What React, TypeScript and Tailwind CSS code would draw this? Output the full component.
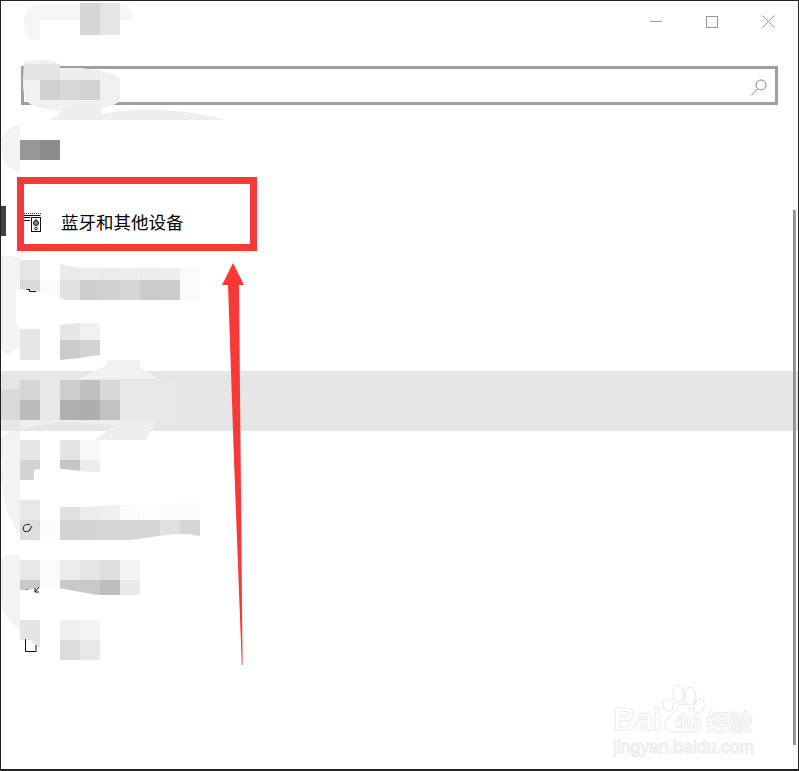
import React from 'react';

type RowData = {
  top: string[];
  bottom: string[];
};

const rows: RowData[] = [
  {
    top: ['#e5e5e5', '#ffffff', '#eaeaea', '#ececec', '#ebebeb', '#eeeeee', '#ececec', '#eeeeee', '#fafafa'],
    bottom: ['#d9d9d9', '#fafafa', '#e2e2e2', '#cfcfcf', '#d0d0d0', '#d6d6d6', '#cbcbcb', '#cccccc', '#fafafa'],
  },
  {
    top: ['#e6e6e6', '#ffffff', '#e5e5e5', '#f0f0f0'],
    bottom: ['#e6e6e6', '#ffffff', '#cbcbcb', '#d3d3d3'],
  },
  {
    top: ['#d5d5d5', '#e8e8e8', '#cdcdcd', '#c0c0c0', '#d8d8d8'],
    bottom: ['#bbbbbb', '#e8e8e8', '#b0b0b0', '#aeaeae', '#c2c2c2'],
  },
  {
    top: ['#e6e6e6', '#ffffff', '#e4e4e4', '#f8f8f8'],
    bottom: ['#d3d3d3', '#ffffff', '#c5c5c5', '#ebebeb'],
  },
  {
    top: ['#e8e8e8', '#ffffff', '#e0e0e0', '#ececec', '#efefef', '#fbfbfb', '#fdfdfd', '#fcfcfc', '#fbfbfb'],
    bottom: ['#dedede', '#fcfcfc', '#d2d2d2', '#d4d4d4', '#d6d6d6', '#d6d6d6', '#d6d6d6', '#e0e0e0', '#d6d6d6'],
  },
  {
    top: ['#e8e8e8', '#fafafa', '#ebebeb', '#e5e5e5', '#dedede', '#f3f3f3'],
    bottom: ['#c9c9c9', '#fafafa', '#c9c9c9', '#c8c8c8', '#bdbdbd', '#e9e9e9'],
  },
  {
    top: ['#e4e4e4', '#ffffff', '#efefef', '#f3f3f3'],
    bottom: ['#ffffff', '#ffffff', '#dcdcdc', '#e8e8e8'],
  },
];

function Tiles({ colors }: { colors: string[] }) {
  return (
    <div className="flex">
      {colors.map((c, i) => (
        <div key={i} className="w-5 h-5" style={{ backgroundColor: c }} />
      ))}
    </div>
  );
}

function DeviceIcon() {
  return (
    <svg width="17" height="20" viewBox="0 0 17 20" fill="none" stroke="#111111" strokeWidth="1">
      <path d="M0 1.5H17" strokeDasharray="1 1" stroke="#333333" />
      <path d="M0 3.5H16.5" />
      <path d="M0 5.5H6M0 8.5H6" />
      <rect x="7.5" y="5.5" width="9" height="14" />
      <circle cx="12" cy="11" r="2.5" fill="#888888" />
      <circle cx="12" cy="16.5" r="1.3" />
      <path d="M11.5 7.5H12.5" />
    </svg>
  );
}

function Watermark() {
  return (
    <div className="absolute left-[612px] top-[683px] w-[146px] h-[72px] text-transparent font-['Liberation_Sans',sans-serif] font-bold [-webkit-text-stroke:1px_#ececec]">
      <span className="absolute left-0 top-[19px] text-[32px] leading-[32px] tracking-[-0.5px]">Bai</span>
      <svg className="absolute left-[48px] top-0" width="46" height="52" viewBox="0 0 46 52" fill="#ffffff" stroke="#e6e6e6" strokeWidth="1">
        <ellipse cx="7" cy="21" rx="5" ry="6.5" transform="rotate(-20 7 21)" />
        <ellipse cx="17.5" cy="10" rx="5.5" ry="8.5" />
        <ellipse cx="29" cy="12" rx="6" ry="8.5" />
        <ellipse cx="38" cy="22" rx="5" ry="7.5" transform="rotate(20 38 22)" />
        <path d="M22 20C15 20 15 29 7 34C1 39 3 48 12 48H32C41 48 43 39 37 34C29 29 29 20 22 20Z" />
      </svg>
      <span className="absolute left-[61px] top-[27px] text-[20px] leading-[20px]">du</span>
      <span className="absolute left-[93px] top-[24px] text-[23px] leading-[26px] font-['Noto_Sans_CJK_SC',sans-serif]">经验</span>
      <span className="absolute left-0 top-[54px] text-[17.5px] leading-[18px] font-normal whitespace-nowrap">jingyan.baidu.com</span>
    </div>
  );
}

export default function App() {
  return (
    <div className="relative w-[799px] h-[771px] overflow-hidden bg-white border border-b-2 border-[#222222] font-['Noto_Sans_CJK_SC',sans-serif]">
      {/* soft smears behind the blurred labels */}
      <svg className="absolute -left-px -top-px z-0" width="799" height="771" viewBox="0 0 799 771" fill="#f3f3f3">
        <path d="M0 145C2 132 10 126 20 125V172C8 170 2 160 0 145Z" />
        <path d="M0 256C8 256 14 256 20 257V345L8 355L0 350Z" />
        <path d="M0 440C6 432 14 430 20 430V500C6 490 0 470 0 440Z" />
        <path d="M0 470L20 470V530L40 545L20 535C8 520 2 500 0 470Z" />
        <path d="M0 560C6 555 14 554 20 554V620L40 647C14 630 0 610 0 600Z" />
      </svg>

      <div className="relative z-10 flex flex-col">
        <div className="flex justify-end h-[65px] pr-px">
          <div className="w-[57px] h-10 flex items-center justify-center">
            <div className="w-3 h-px bg-[#999999] ml-[2px] mt-[1px]" />
          </div>
          <div className="w-[57px] h-10 flex items-center justify-center">
            <div className="w-3 h-3 border border-[#999999] mt-[1px]" />
          </div>
          <div className="w-[57px] h-10 flex items-center justify-center">
            <svg width="13" height="13" viewBox="0 0 13 13" stroke="#999999" className="mt-[1px]">
              <path d="M0.5 0.5L12.5 12.5M12.5 0.5L0.5 12.5" />
            </svg>
          </div>
        </div>

        <div className="ml-5 w-[757px] h-[39px] border-[3px] border-[#9f9f9f] flex items-center justify-end pr-[7px]">
          <svg width="18" height="17" viewBox="0 0 18 17" fill="none" stroke="#888888" strokeWidth="1" className="mt-[3px]">
            <circle cx="11" cy="6" r="5" />
            <path d="M7.5 10L1 16.5" />
          </svg>
        </div>

        <div className="h-[87px] pt-[35px] pl-[19px]">
          <div className="flex">
            <div className="w-5 h-5 bg-[#979797]" />
            <div className="w-5 h-5 bg-[#8c8c8c]" />
          </div>
        </div>

        <div className="relative h-[60px] flex items-center pl-[23px] pb-[1px]">
          <div className="absolute left-0 top-[14px] w-[5px] h-[30px] bg-[#404040]" />
          <DeviceIcon />
          <span className="ml-[20px] text-[17.5px] leading-[24px] text-black whitespace-nowrap">蓝牙和其他设备</span>
        </div>

        {rows.map((row, i) => (
          <div
            key={i}
            className={
              i === 1
                ? 'h-[59px] pt-2 pl-[19px]'
                : i === 2
                  ? 'h-[60px] pt-[9px] pl-[19px] bg-[#e6e6e6]'
                  : i === 3
                    ? 'h-[61px] pt-[9px] pl-[19px]'
                    : 'h-[60px] pt-2 pl-[19px]'
            }
          >
            <Tiles colors={row.top} />
            <Tiles colors={row.bottom} />
          </div>
        ))}
      </div>

      {/* top blurred title, search mask and strokes */}
      <svg className="absolute -left-px -top-px z-20" width="799" height="771" viewBox="0 0 799 771">
        <path d="M24 20C26 8 32 4 40 4H120C130 4 134 14 134 20H120V35H80V20H40V40H30C26 34 24 28 24 20Z" fill="#f5f5f5" />
        <rect x="80" y="3" width="20" height="32" fill="#d6d6d6" />
        <rect x="100" y="3" width="20" height="32" fill="#e5e5e5" />
        <path d="M24 62C30 60 50 59 57 62V68L80 68C100 70 120 74 120 80V100C118 104 108 108 100 108C80 116 40 110 30 104C24 100 23 90 23 80Z" fill="#f0f0f0" />
        <rect x="24" y="64" width="36" height="16" fill="#e4e4e4" />
        <rect x="60" y="70" width="40" height="10" fill="#eeeeee" />
        <rect x="40" y="80" width="20" height="20" fill="#d0d0d0" />
        <rect x="60" y="80" width="20" height="20" fill="#d8d8d8" />
        <rect x="80" y="80" width="20" height="20" fill="#d2d2d2" />
        <path d="M50 120L72 104H100L102 114C140 106 190 110 226 120Z" fill="#eeeeee" />
        {/* white strokes that cut into the mosaic rows */}
        <path d="M60 259H201V268H80L60 264Z" fill="#ffffff" />
        <path d="M20 300H66C50 294 30 288 16 290V325L20 329H60V300Z" fill="#ffffff" />
        <rect x="20" y="329" width="20" height="31" fill="#e6e6e6" />
        <path d="M60 361V360L80 358L100 355V361Z" fill="#ffffff" />
        <path d="M60 319H100V323H80L60 325Z" fill="#ffffff" />
        {/* paler strokes over the selected row */}
        <path d="M0 389H20V420H0Z" fill="#dadada" />
        <path d="M120 381H175V420H120Z" fill="#e8e8e8" />
        <path d="M80 378L107 365V360H140V367L158 379H80Z" fill="#f2f2f2" />
        <path d="M20 420H158L145 440H95L115 425L60 422L20 428Z" fill="#eeeeee" />
        <path d="M34 470C50 466 70 470 88 472H101V481H34Z" fill="#ffffff" />
        <path d="M20 481H100V500H20Z" fill="#ffffff" />
        <path d="M60 499H201V503L120 505L80 507H60Z" fill="#ffffff" />
        <path d="M60 541H200V536C180 531 160 536 130 540L60 541Z" fill="#ffffff" />
        <path d="M28 590C50 582 70 592 100 595H141V601H20V590Z" fill="#ffffff" />
        <path d="M40 648L20 632V620H40Z" fill="#e4e4e4" />
        <g fill="none" stroke="#111111" strokeWidth="1">
          <path d="M26.5 289.5H29.5V291.5H36" />
          <path d="M30 525C24 522 21 530 25 531.5C27 532 29 531 30 530M32 526L29 531" />
          <path d="M39 587L35 592M35 588V592H39M27 589V590" />
          <path d="M25.5 639V651.5H36V645" />
        </g>
        <rect x="793" y="210" width="3" height="535" fill="#9a9a9a" />
        <rect x="793" y="210" width="1" height="535" fill="#8a8a8a" />
        <path d="M233 263L244 285H239L242.6 665H241.8L234 460L228 285H222Z" fill="#fb3838" />
      </svg>

      <div className="absolute left-4 top-[176px] z-30 w-[240px] h-[74px] border-[7px] border-[#fb3838]" />
      <div className="z-30">
        <Watermark />
      </div>
    </div>
  );
}
